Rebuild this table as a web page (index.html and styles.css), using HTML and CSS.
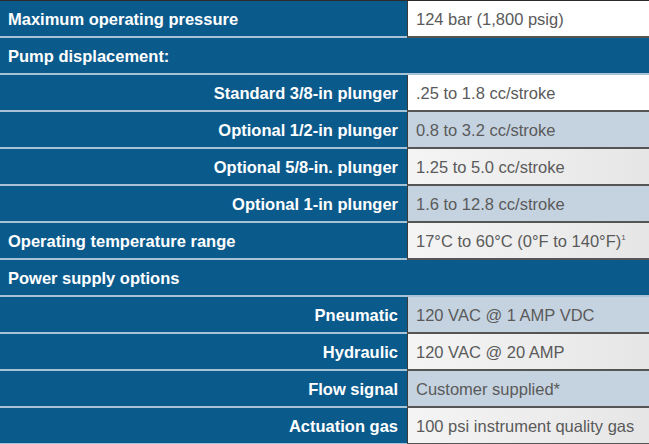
FILE: index.html
```html
<!DOCTYPE html>
<html>
<head>
<meta charset="utf-8">
<link rel="stylesheet" href="styles.css">
</head>
<body>
<div class="spec">
  <div class="row">
    <div class="label">Maximum operating pressure</div>
    <div class="value white">124 bar (1,800 psig)</div>
  </div>
  <div class="row">
    <div class="label full">Pump displacement:</div>
  </div>
  <div class="row">
    <div class="label right">Standard 3/8-in plunger</div>
    <div class="value white">.25 to 1.8 cc/stroke</div>
  </div>
  <div class="row">
    <div class="label right">Optional 1/2-in plunger</div>
    <div class="value blue">0.8 to 3.2 cc/stroke</div>
  </div>
  <div class="row">
    <div class="label right">Optional 5/8-in. plunger</div>
    <div class="value grey">1.25 to 5.0 cc/stroke</div>
  </div>
  <div class="row">
    <div class="label right">Optional 1-in plunger</div>
    <div class="value blue">1.6 to 12.8 cc/stroke</div>
  </div>
  <div class="row">
    <div class="label">Operating temperature range</div>
    <div class="value grey">17°C to 60°C (0°F to 140°F)<sup>1</sup></div>
  </div>
  <div class="row">
    <div class="label full">Power supply options</div>
  </div>
  <div class="row">
    <div class="label right">Pneumatic</div>
    <div class="value blue">120 VAC @ 1 AMP VDC</div>
  </div>
  <div class="row">
    <div class="label right">Hydraulic</div>
    <div class="value grey">120 VAC @ 20 AMP</div>
  </div>
  <div class="row">
    <div class="label right">Flow signal</div>
    <div class="value blue">Customer supplied*</div>
  </div>
  <div class="row">
    <div class="label right">Actuation gas</div>
    <div class="value grey">100 psi instrument quality gas</div>
  </div>
</div>
</body>
</html>
```

FILE: styles.css
```css
html, body {
  margin: 0;
  padding: 0;
  background: #0b5a8c;
}
body {
  width: 649px;
  height: 444px;
  overflow: hidden;
  font-family: "Liberation Sans", Arial, sans-serif;
}
.spec {
  border-top: 1px solid #2b2b2b;
  display: flex;
  flex-direction: column;
}
.row {
  display: flex;
  height: 37px;
}
.label {
  width: 407px;
  box-sizing: border-box;
  background: #0b5a8c;
  color: #fff;
  font-weight: bold;
  font-size: 16.5px;
  padding: 1px 8px 0;
  display: flex;
  align-items: center;
  border-bottom: 2px solid #a9c2d6;
}
.label.right {
  justify-content: flex-end;
  padding-right: 9px;
}
.label.full {
  width: 649px;
}
.value {
  flex: 1;
  box-sizing: border-box;
  color: #5a5a5a;
  font-size: 16.5px;
  padding: 1px 8px 0;
  display: flex;
  align-items: center;
  border-left: 1px solid #3a3a3a;
  border-bottom: 2px solid #555;
}
.value.white { background: #ffffff; }
.value.blue { background: #c5d3e0; }
.value.grey { background: linear-gradient(90deg, #f4f4f4, #ececec 60%, #e6e6e6); }
sup {
  font-size: 8px;
  align-self: flex-start;
  margin-top: 9px;
}
```
